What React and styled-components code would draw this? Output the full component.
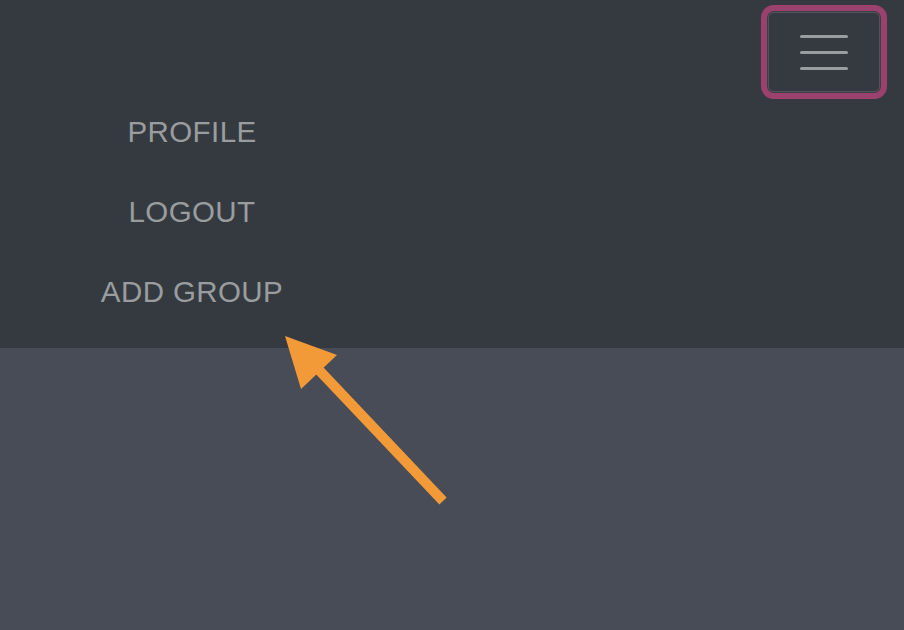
import React from "react";
import styled, { createGlobalStyle } from "styled-components";

const GlobalStyle = createGlobalStyle`
  html, body {
    margin: 0;
    padding: 0;
    background: #484c57;
    font-family: "Liberation Sans", Arial, sans-serif;
  }
`;

const Page = styled.div`
  position: relative;
  width: 904px;
  height: 630px;
  background: #484c57;
  overflow: hidden;
`;

const Navbar = styled.header`
  display: flex;
  justify-content: space-between;
  align-items: flex-start;
  height: 348px;
  background: #343a40;
  padding: 12px 24px 0 0;
  box-sizing: border-box;
`;

const NavList = styled.nav`
  display: flex;
  flex-direction: column;
  width: 384px;
  padding-top: 80px;
`;

const NavLink = styled.a`
  display: block;
  text-align: center;
  line-height: 80px;
  font-size: 29.5px;
  letter-spacing: 0.4px;
  color: #9a9d9f;
  text-decoration: none;
  text-transform: uppercase;
`;

const Toggler = styled.button`
  display: flex;
  flex-direction: column;
  align-items: center;
  justify-content: center;
  gap: 13px;
  width: 112px;
  height: 80px;
  padding: 0;
  background: transparent;
  border: 1px solid #50555a;
  border-radius: 6px;
  box-shadow: 0 0 0 1px #3b3f44, 0 0 0 7px #9a416d, 0 0 1px 7px #7a3a5a;
  cursor: pointer;
`;

const Bar = styled.span`
  display: block;
  width: 48px;
  height: 3px;
  border-radius: 2px;
  background: #9a9ea1;
`;

const Pointer = styled.svg`
  position: absolute;
  left: 0;
  top: 0;
  pointer-events: none;
`;

const links = ["Profile", "Logout", "Add Group"];

export default function App() {
  return (
    <Page>
      <GlobalStyle />
      <Navbar>
        <NavList>
          {links.map((l) => (
            <NavLink key={l} href="#">{l}</NavLink>
          ))}
        </NavList>
        <Toggler aria-label="Toggle navigation">
          <Bar />
          <Bar />
          <Bar />
        </Toggler>
      </Navbar>
      <Pointer width="904" height="630" viewBox="0 0 904 630">
        <line x1="443" y1="501" x2="318" y2="369" stroke="#f29a38" strokeWidth="10" />
        <polygon points="285,336 337,355 301,389" fill="#f29a38" />
      </Pointer>
    </Page>
  );
}
